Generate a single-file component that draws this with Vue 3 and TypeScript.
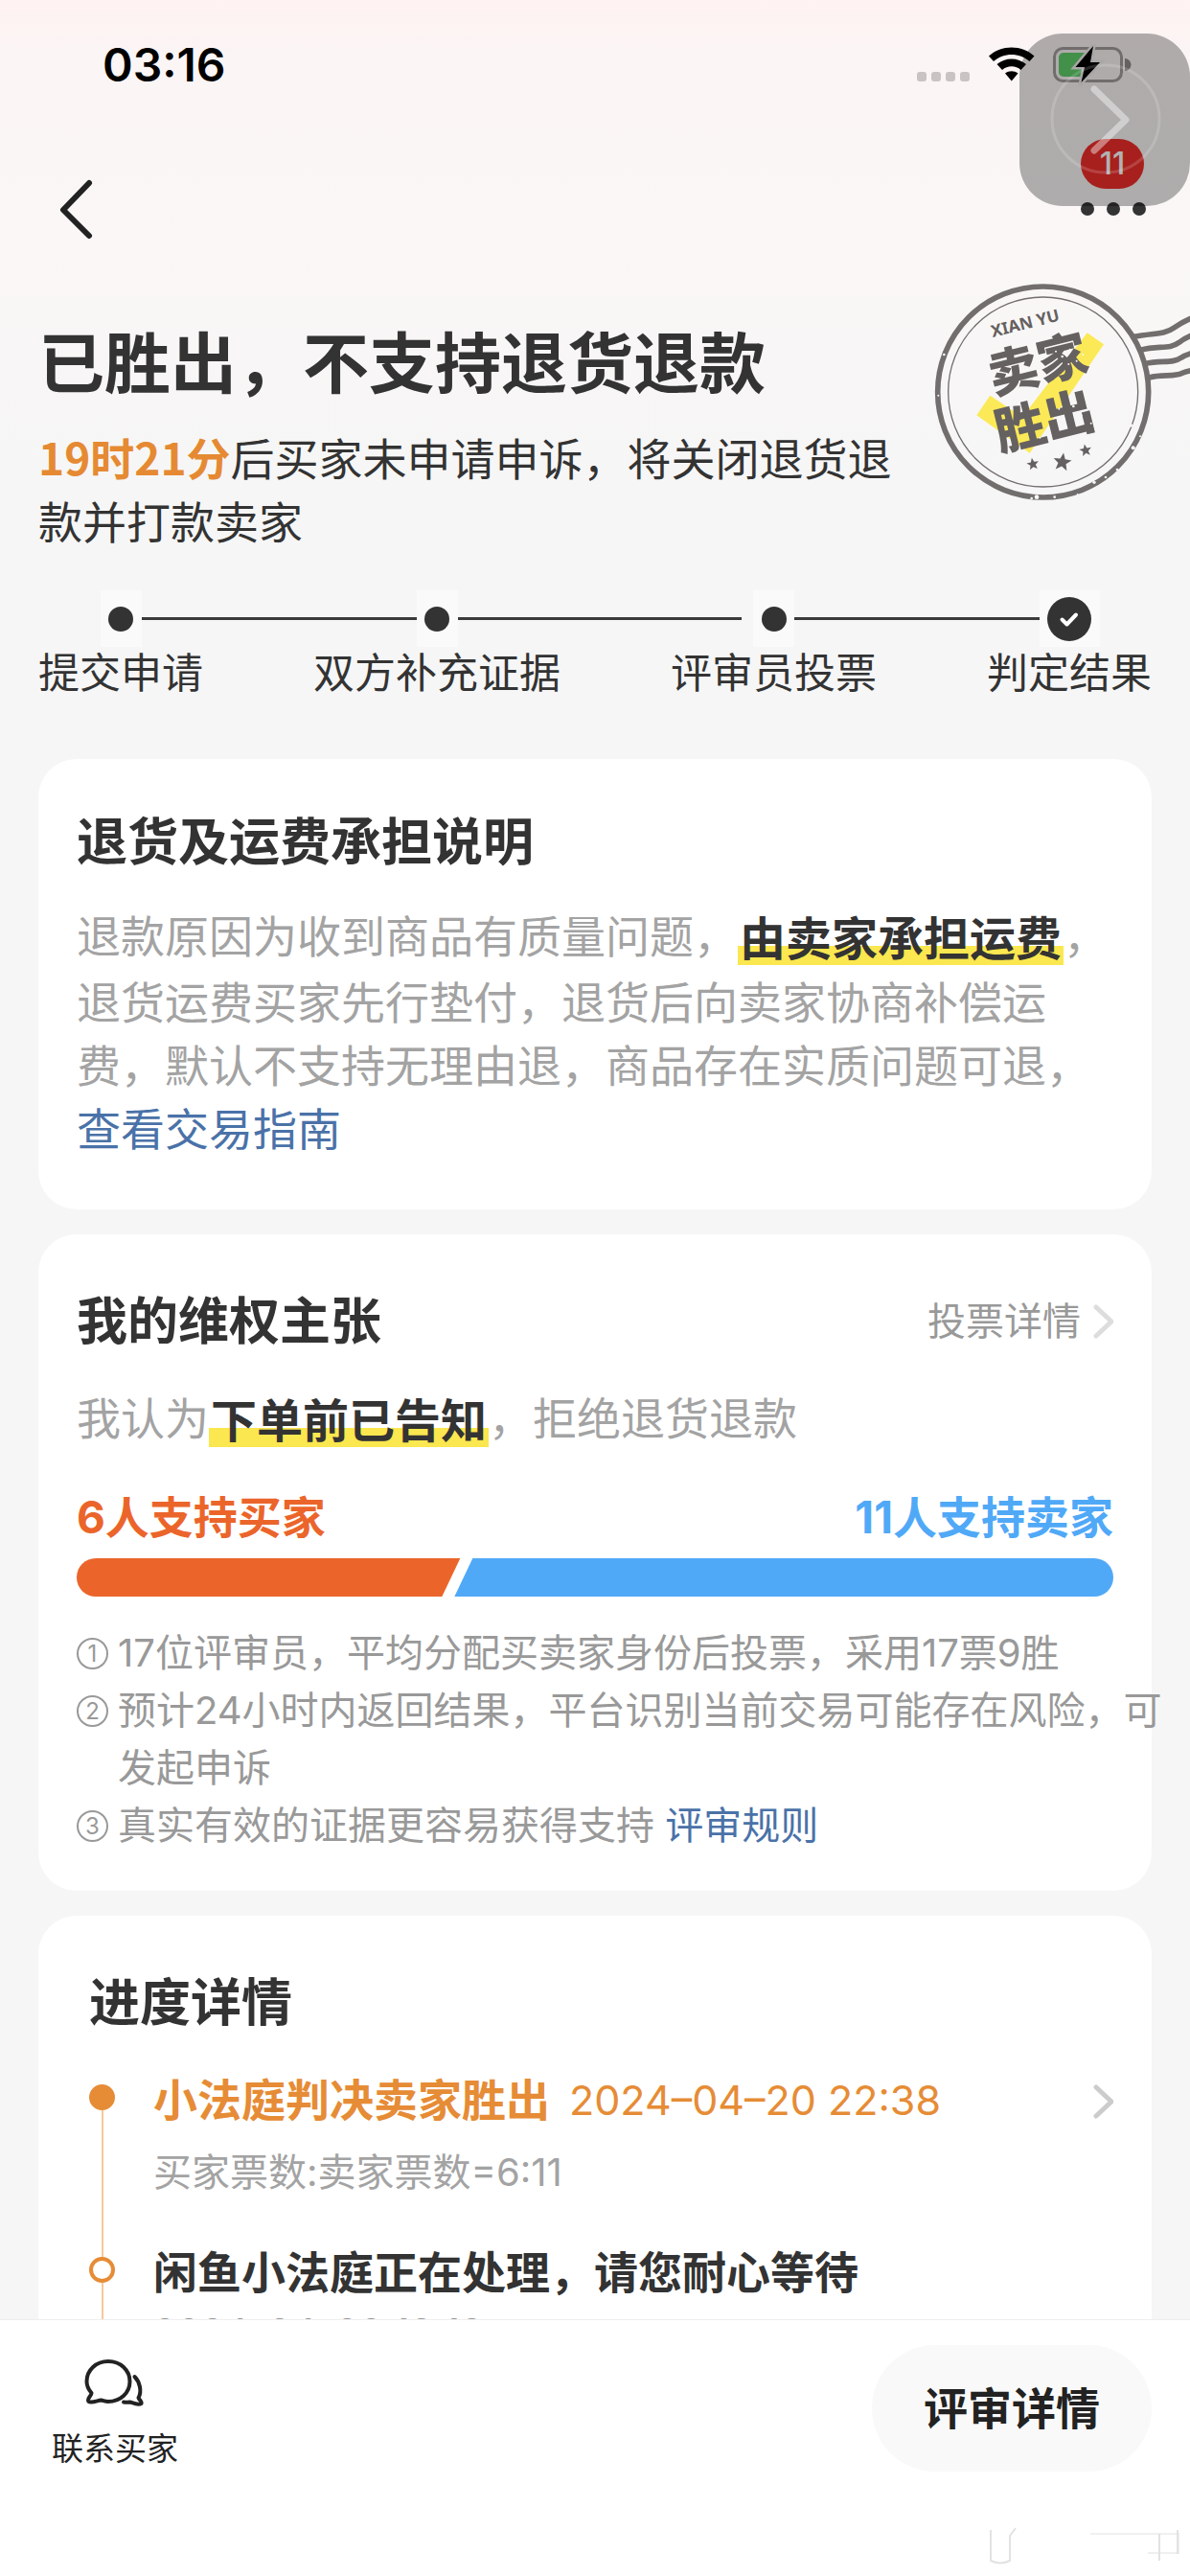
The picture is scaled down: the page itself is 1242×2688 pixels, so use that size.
<script setup lang="ts">
interface Step {
  label: string
  done?: boolean
  gapBefore?: boolean
}

const steps: Step[] = [
  { label: '提交申请' },
  { label: '双方补充证据' },
  { label: '评审员投票', gapBefore: true },
  { label: '判定结果', done: true },
]

const buyerVotes = 6
const sellerVotes = 11
// The slanted divider takes about two percent of the bar.
const buyerShare = Math.round((buyerVotes / (buyerVotes + sellerVotes)) * 100) + 2

const star = '0,-10 2.6,-3.4 9.5,-3.1 4.1,1.3 5.9,8.1 0,4.3 -5.9,8.1 -4.1,1.3 -9.5,-3.1 -2.6,-3.4'
</script>

<template>
  <div class="page">
    <main class="scroll">
      <header class="status">
        <span class="clock">03:16</span>
        <svg class="status-icons" width="228" height="44" viewBox="0 0 228 44" aria-hidden="true">
          <g fill="#c9c3c3">
            <rect x="0" y="29" width="10" height="10" rx="3" />
            <rect x="15" y="29" width="10" height="10" rx="3" />
            <rect x="30" y="29" width="10" height="10" rx="3" />
            <rect x="45" y="29" width="10" height="10" rx="3" />
          </g>
          <g fill="#000">
            <path d="M75 12.500C88 .5 109.500 .5 122.500 12.500L117.500 18C107 8.500 90.500 8.500 80 18Z" />
            <path d="M83.500 21C92 13.500 105.500 13.500 114 21L108.500 27C103 22 94.500 22 89 27Z" />
            <path d="M92 30.500C96 27.500 101.500 27.500 105.500 30.500L98.800 38.500Z" />
          </g>
          <rect x="143.500" y="4.500" width="70" height="34" rx="9" fill="none" stroke="#a39d9d" stroke-width="3" />
          <path d="M217 15a6 6 0 0 1 0 13z" fill="#918b8b" />
          <rect x="148" y="9" width="32" height="25" rx="5" fill="#5fce6b" />
          <path d="M184 2L165.500 24H175L171.500 40L191 19H181Z" fill="#000" stroke="#f2eeee" stroke-width="5" paint-order="stroke" />
        </svg>
      </header>

      <nav class="nav">
        <button class="back" type="button" aria-label="返回">
          <svg width="38" height="64" viewBox="0 0 38 64" aria-hidden="true">
            <path d="M32 5L5 33L32 60" fill="none" stroke="#222" stroke-width="6" stroke-linecap="round" stroke-linejoin="round" />
          </svg>
        </button>
        <button class="more" type="button" aria-label="更多">
          <i></i><i></i><i></i>
          <span class="badge">11</span>
        </button>
      </nav>

      <button class="assist" type="button" aria-label="展开">
        <svg width="178" height="180" viewBox="0 0 178 180" aria-hidden="true">
          <circle cx="90" cy="89" r="56" fill="none" stroke="#fff" stroke-opacity=".16" stroke-width="3" />
          <path d="M78 58L111 90L78 122" fill="none" stroke="#fff" stroke-opacity=".42" stroke-width="7" stroke-linecap="round" stroke-linejoin="round" />
        </svg>
      </button>

      <section class="hero">
        <div class="hero-text">
          <h1>已胜出，不支持退货退款</h1>
          <p><strong>19时21分</strong>后买家未申请申诉，将关闭退货退款并打款卖家</p>
        </div>
        <svg class="stamp" width="300" height="240" viewBox="0 60 900 720" role="img" aria-label="卖家胜出">
          <polygon points="578,232 630,268 398,608 232,490 274,428 375,496" fill="#fbe957" />
          <g fill="none" stroke="#726e6d">
            <circle cx="440" cy="417" r="330" stroke-width="17" />
            <circle cx="440" cy="417" r="297" stroke-width="4" />
            <g stroke-width="17">
              <path d="M724 244C790 232 820 238 850 216C870 202 885 194 904 186" />
              <path d="M745 286C800 270 835 286 866 262C880 250 890 246 904 240" />
              <path d="M758 329C810 316 845 330 872 310C884 302 892 300 904 296" />
              <path d="M772 372C815 360 850 372 876 358C886 353 892 352 904 350" />
            </g>
          </g>
          <g fill="#656160">
            <text class="stamp-en" transform="translate(282 246) rotate(-14)">XIAN YU</text>
            <text class="stamp-cn" transform="translate(284 424) rotate(-14)">卖家</text>
            <text class="stamp-cn" transform="translate(305 602) rotate(-14)">胜出</text>
            <polygon :points="star" transform="translate(408 643) rotate(-10) scale(2)" />
            <polygon :points="star" transform="translate(500 637) rotate(8) scale(3)" />
            <polygon :points="star" transform="translate(573 600) rotate(-10) scale(2)" />
          </g>
          <g fill="#f7f6f6">
            <circle cx="420" cy="746" r="7" /><circle cx="404" cy="750" r="4" /><circle cx="476" cy="746" r="4" />
            <circle cx="548" cy="738" r="3" /><circle cx="600" cy="700" r="5" /><circle cx="636" cy="684" r="4" />
            <circle cx="672" cy="660" r="4" /><circle cx="722" cy="592" r="6" /><circle cx="716" cy="522" r="5" />
            <circle cx="744" cy="556" r="3" /><circle cx="112" cy="428" r="3" /><circle cx="130" cy="300" r="4" />
            <circle cx="480" cy="290" r="3" /><circle cx="500" cy="306" r="4" /><circle cx="524" cy="284" r="3" />
            <circle cx="545" cy="320" r="3" /><circle cx="565" cy="300" r="3" /><circle cx="520" cy="330" r="3" />
            <circle cx="490" cy="470" r="3" /><circle cx="535" cy="462" r="4" /><circle cx="560" cy="490" r="3" />
            <circle cx="585" cy="462" r="3" /><circle cx="590" cy="515" r="3" /><circle cx="430" cy="560" r="3" />
          </g>
        </svg>
      </section>

      <ol class="steps">
        <template v-for="(step, i) in steps" :key="step.label">
          <li v-if="i > 0" class="join" aria-hidden="true"></li>
          <li class="step">
            <div class="track">
              <span class="line" :class="{ none: i === 0, short: step.gapBefore }"></span>
              <span class="marker" :class="{ done: step.done }">
                <svg v-if="step.done" width="46" height="46" viewBox="0 0 46 46" aria-hidden="true">
                  <circle cx="23" cy="23" r="23" fill="#333" />
                  <path d="M15.500 23.500L20.500 28.500L30 18.500" fill="none" stroke="#fff" stroke-width="4" stroke-linecap="round" stroke-linejoin="round" />
                </svg>
                <i v-else></i>
              </span>
              <span class="line" :class="{ none: i === steps.length - 1 }"></span>
            </div>
            <span class="step-label">{{ step.label }}</span>
          </li>
        </template>
      </ol>

      <section class="card freight">
        <h2>退货及运费承担说明</h2>
        <p class="text">退款原因为收到商品有质量问题，<mark>由卖家承担运费</mark>，退货运费买家先行垫付，退货后向卖家协商补偿运费，默认不支持无理由退，商品存在实质问题可退，<a href="#guide">查看交易指南</a></p>
      </section>

      <section class="card claim">
        <div class="card-head">
          <h2>我的维权主张</h2>
          <a class="detail" href="#votes">投票详情
            <svg width="22" height="36" viewBox="0 0 22 36" aria-hidden="true">
              <path d="M4 3L20 18L4 33" fill="none" stroke="#ddd" stroke-width="5" stroke-linecap="round" stroke-linejoin="round" />
            </svg>
          </a>
        </div>
        <p class="text">我认为<mark>下单前已告知</mark>，拒绝退货退款</p>
        <div class="votes">
          <span class="buyer">{{ buyerVotes }}人支持买家</span>
          <span class="seller">{{ sellerVotes }}人支持卖家</span>
        </div>
        <div class="bar">
          <span class="bar-buyer" :style="{ width: buyerShare + '%' }"></span>
          <span class="bar-seller"></span>
        </div>
        <ol class="notes">
          <li><i class="num">1</i><span>17位评审员，平均分配买卖家身份后投票，采用17票9胜</span></li>
          <li><i class="num">2</i><span>预计24小时内返回结果，平台识别当前交易可能存在风险，可发起申诉</span></li>
          <li><i class="num">3</i><span>真实有效的证据更容易获得支持 <a href="#rules">评审规则</a></span></li>
        </ol>
      </section>

      <section class="card progress">
        <h2>进度详情</h2>
        <ul class="timeline">
          <li class="event current">
            <div class="rail"><i class="lead"></i><i class="dot"></i><i class="tail"></i></div>
            <div class="event-body">
              <p class="event-title"><strong>小法庭判决卖家胜出</strong><time>2024–04–20 22:38</time></p>
              <p class="event-sub">买家票数:卖家票数=6:11</p>
            </div>
            <svg class="event-arrow" width="22" height="36" viewBox="0 0 22 36" aria-hidden="true">
              <path d="M4 3L20 18L4 33" fill="none" stroke="#ccc" stroke-width="5" stroke-linecap="round" stroke-linejoin="round" />
            </svg>
          </li>
          <li class="event">
            <div class="rail"><i class="lead"></i><i class="dot"></i><i class="tail"></i></div>
            <div class="event-body">
              <p class="event-title"><strong>闲鱼小法庭正在处理，请您耐心等待</strong></p>
              <p class="event-time">2024–04–20 18:18</p>
            </div>
          </li>
        </ul>
      </section>
    </main>

    <footer class="footer">
      <button class="contact" type="button">
        <svg width="64" height="52" viewBox="0 0 64 52" fill="none" stroke="#222" stroke-width="4" stroke-linecap="round" stroke-linejoin="round" aria-hidden="true">
          <path d="M7.500 36C4 32 2.500 28 2.500 24C2.500 12 12.500 3 25 3C37.500 3 47.500 12 47.500 24C47.500 36 37.500 45 25 45C22 45 20 44 17.500 43.500C14 44 11 45.500 7 45.500C2.500 45.500 4 42 5.500 40C6.500 38.500 7.500 37.500 7.500 36Z" />
          <path d="M52.500 19C57.500 24 60.500 34 56.500 41C57 43 60.500 45 59.500 47C56 49 51 46.500 47.500 45.500C45 46 43 46 41 45.500" />
        </svg>
        <span>联系买家</span>
      </button>
      <button class="review" type="button">评审详情</button>
      <svg class="mark" width="206" height="48" viewBox="0 0 206 48" aria-hidden="true">
        <g fill="none" stroke="#e2e2e2" stroke-width="2">
          <path d="M6 6V38Q16 43 26 38V12L32 4" />
          <path d="M110 10H202V30H170" stroke="#f0f0f0" />
          <path d="M201 6V31M182 10V38" />
        </g>
      </svg>
    </footer>
  </div>
</template>

<style>
body {
  background: #f6f6f6;
}
</style>

<style scoped>
.page {
  position: relative;
  display: flex;
  flex-direction: column;
  height: 100vh;
  overflow: hidden;
  color: #333;
  font-family: Inter, "Noto Sans CJK SC", sans-serif;
  background: linear-gradient(#fff2f2 0, #fbf5f5 60px, #faf7f6 260px, #f6f6f6 520px);
}
h1, h2, p, ol, ul {
  margin: 0;
  padding: 0;
  list-style: none;
}
i {
  font-style: normal;
}
a {
  color: #4a72a8;
  text-decoration: none;
}
button {
  padding: 0;
  border: 0;
  background: none;
  color: inherit;
  font: inherit;
}
svg {
  display: block;
}
.scroll {
  flex: 1;
  min-height: 0;
  overflow: hidden;
}
.status {
  display: flex;
  align-items: center;
  justify-content: space-between;
  height: 136px;
  padding: 0 57px 10px 107px;
}
.clock {
  font: 600 48px/60px Inter, sans-serif;
  color: #000;
}
.nav {
  display: flex;
  align-items: center;
  justify-content: space-between;
  height: 144px;
  padding: 0 46px 0 61px;
}
.more {
  position: relative;
  display: flex;
  gap: 13px;
}
.more i {
  width: 14px;
  height: 14px;
  border-radius: 50%;
  background: #333;
}
.badge {
  position: absolute;
  left: 0;
  bottom: 28px;
  width: 66px;
  border-radius: 26px;
  background: #f02f2a;
  color: #fff;
  font: 500 32px/52px Inter, sans-serif;
}
.assist {
  position: absolute;
  z-index: 1;
  top: 35px;
  right: 0;
  border-radius: 45px;
  background: rgba(0, 0, 0, 0.3);
}
.hero {
  display: flex;
  padding-left: 40px;
}
.hero-text {
  flex: 1;
  padding-top: 40px;
}
.hero-text h1 {
  margin-bottom: 16px;
  font-size: 69px;
  font-weight: 700;
  line-height: 100px;
}
.hero-text p {
  font-size: 46px;
  line-height: 66px;
}
.hero-text strong {
  color: #e58a33;
  font-family: "Noto Sans CJK SC", sans-serif;
  font-weight: 700;
  line-height: 60px;
}
.stamp {
  flex: none;
}
.stamp-en {
  font: 700 52px "Noto Sans", sans-serif;
}
.stamp-cn {
  font: 900 158px "Noto Sans CJK SC", sans-serif;
}
.steps {
  display: flex;
  padding: 38px 40px 63px;
}
.track {
  display: flex;
  align-items: center;
  height: 59px;
}
.line {
  flex: 1;
  height: 3px;
  background: #3a3a3a;
}
.line.none {
  background: none;
}
.line.short {
  background: linear-gradient(to left, transparent 12px, #3a3a3a 12px);
}
.join {
  flex: 1;
  height: 3px;
  margin-top: 28px;
  background: #3a3a3a;
}
.marker {
  display: flex;
  align-items: center;
  justify-content: center;
  width: 43px;
  height: 59px;
  background: #fafafa;
}
.marker.done {
  width: 63px;
}
.marker i {
  width: 26px;
  height: 26px;
  border-radius: 50%;
  background: #333;
}
.step-label {
  display: block;
  font-size: 43px;
  line-height: 54px;
}
.card {
  margin: 0 40px 26px;
  padding: 54px 40px 38px;
  border-radius: 40px;
  background: #fff;
}
.card h2 {
  font-size: 53px;
  font-weight: 700;
  line-height: 74px;
}
.freight {
  padding: 50px 40px 51px;
}
.text {
  margin-top: 28px;
  color: #a3a3a3;
  font-size: 46px;
  line-height: 66px;
}
.claim .text {
  margin-top: 31px;
}
.text mark {
  display: inline-block;
  vertical-align: -3px;
  padding: 0 2px;
  background: linear-gradient(transparent 40px, #fbe74f 40px, #fbe74f 60px, transparent 60px);
  color: #333;
  font-size: 48px;
  font-weight: 700;
}
.card-head {
  display: flex;
  align-items: center;
  justify-content: space-between;
}
.detail {
  display: flex;
  align-items: center;
  gap: 12px;
  color: #999;
  font-size: 40px;
  line-height: 60px;
}
.votes {
  display: flex;
  justify-content: space-between;
  margin-top: 37px;
  font-size: 46px;
  font-weight: 700;
  line-height: 60px;
}
.buyer {
  color: #eb652b;
}
.seller {
  color: #50a9f7;
}
.bar {
  display: flex;
  height: 40px;
  margin-top: 13px;
  overflow: hidden;
  border-radius: 20px;
}
.bar-buyer {
  background: #eb652b;
  clip-path: polygon(0 0, 100% 0, calc(100% - 19px) 100%, 0 100%);
}
.bar-seller {
  flex: 1;
  margin-left: -6px;
  background: #50a9f7;
  clip-path: polygon(19px 0, 100% 0, 100% 100%, 0 100%);
}
.notes {
  margin: 29px -60px 0 0;
  color: #999;
  font-size: 40px;
  line-height: 60px;
}
.notes li {
  display: flex;
  align-items: flex-start;
  gap: 10px;
}
.num {
  flex: none;
  box-sizing: border-box;
  width: 33px;
  height: 33px;
  margin-top: 14px;
  border: 2px solid #999;
  border-radius: 50%;
  font-size: 24px;
  line-height: 29px;
  text-align: center;
}
.progress {
  padding-left: 53px;
}
.timeline {
  margin-top: 31px;
}
.event {
  display: flex;
  gap: 40px;
}
.rail {
  display: flex;
  flex-direction: column;
  align-items: center;
  width: 27px;
}
.lead {
  width: 2px;
  height: 17px;
  background: #f5c99c;
}
.current .lead {
  background: none;
}
.dot {
  box-sizing: border-box;
  width: 27px;
  height: 27px;
  border: 4px solid #e68c36;
  border-radius: 50%;
}
.current .dot {
  background: #e68c36;
}
.tail {
  flex: 1;
  width: 2px;
  background: #f5c99c;
}
.event-body {
  flex: 1;
  padding-bottom: 41px;
}
.event-title {
  display: flex;
  gap: 20px;
  font-size: 46px;
  line-height: 66px;
}
.event-title strong {
  font-weight: 700;
}
.event-title time {
  font-size: 43px;
}
.current .event-title {
  color: #e68c36;
}
.event-sub {
  margin-top: 13px;
  color: #a3a3a3;
  font-size: 40px;
  line-height: 60px;
}
.event-time {
  color: #999;
  font-size: 40px;
  line-height: 60px;
}
.event-arrow {
  margin-top: 17px;
}
.footer {
  position: relative;
  display: flex;
  align-items: flex-start;
  justify-content: space-between;
  height: 241px;
  padding: 26px 40px 0 54px;
  border-top: 1px solid #eee;
  background: #fff;
}
.contact {
  display: flex;
  flex-direction: column;
  align-items: center;
  gap: 20px;
  padding-top: 14px;
  color: #222;
  font-size: 33px;
  line-height: 44px;
}
.review {
  padding: 0 54px;
  border-radius: 66px;
  background: #f9f9f9;
  color: #222;
  font-size: 46px;
  font-weight: 700;
  line-height: 132px;
}
.mark {
  position: absolute;
  right: 8px;
  bottom: 6px;
}
</style>
